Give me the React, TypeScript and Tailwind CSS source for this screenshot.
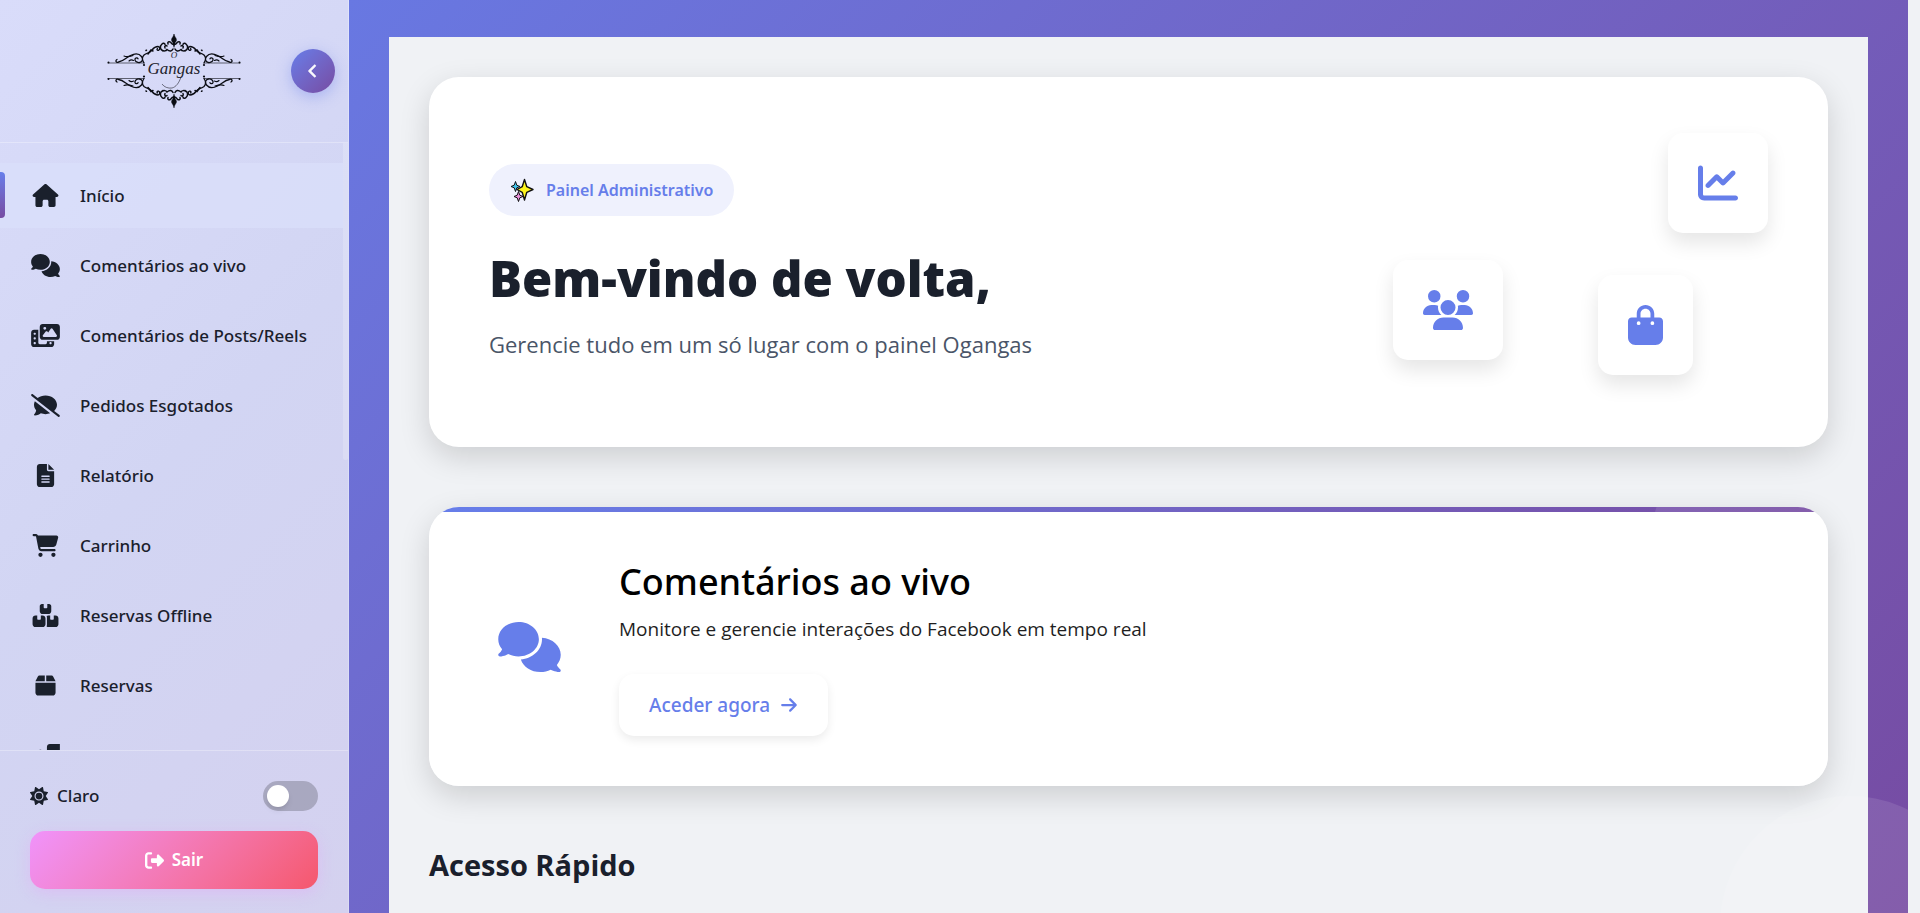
import { useState } from 'react';
import type { IconType } from 'react-icons';
import {
  FaArrowRight,
  FaBagShopping,
  FaBox,
  FaBoxesStacked,
  FaCartShopping,
  FaChartLine,
  FaChevronLeft,
  FaComments,
  FaCommentSlash,
  FaFileLines,
  FaHouse,
  FaPhotoFilm,
  FaRightFromBracket,
  FaSun,
  FaTruckRampBox,
  FaUsers,
} from 'react-icons/fa6';

const menu: { label: string; icon: IconType }[] = [
  { label: 'Início', icon: FaHouse },
  { label: 'Comentários ao vivo', icon: FaComments },
  { label: 'Comentários de Posts/Reels', icon: FaPhotoFilm },
  { label: 'Pedidos Esgotados', icon: FaCommentSlash },
  { label: 'Relatório', icon: FaFileLines },
  { label: 'Carrinho', icon: FaCartShopping },
  { label: 'Reservas Offline', icon: FaBoxesStacked },
  { label: 'Reservas', icon: FaBox },
  { label: 'Encomendas Enviadas', icon: FaTruckRampBox },
];

// One quarter of the frame, mirrored by the logo below
const Ornament = ({ transform }: { transform?: string }) => (
  <g transform={transform} fill="none" stroke="#0b0d14" strokeLinecap="round">
    <path d="M1 29H37" strokeWidth="0.6" />
    <circle cx="1.5" cy="28.6" r="1" fill="#0b0d14" stroke="none" />
    <circle cx="37" cy="31" r="1.1" fill="#0b0d14" stroke="none" />
    <path d="M10 25.500a1.500 1.500 0 1 0 1.500 2.500c5-.5 7-4 12-6.500 5-2.500 9-1.500 11 1 2 2.500 1 5.500-2 6-3 .3-5-1.500-4.500-3.500.5-1.500 2.500-1.600 3-.2" strokeWidth="1.300" />
    <path d="M17 22c3 1.500 6 .5 9-.5M22 27c1.500-1.500 3-1.500 4.500-.5" strokeWidth="1.100" />
    <path d="M37 29c-2-3-2-6 0-8 3-2.500 6-1.500 8-5 1.500-2 3-3.500 6-3.500 2 .3 2.500 3 .5 3.800-1.500.3-2-1-1-1.700" strokeWidth="1.300" />
    <path d="M41 20l3-4 2 1M39 16.500l.5-.3" strokeWidth="1.500" />
    <path d="M56 17c-3-1-3.500-5-1-7 1-1.200 3-1 3 .5M55 16c2 1.500 4 1 5-.5 3 2.500 5 1.500 6-.5M58 14c-1-2 1-3 2-2" strokeWidth="1.500" />
    <path d="M61 10c-.8-2 1-3 2.500-1.800 1.200.8.5 2.300 3.500 2.300" strokeWidth="1.500" />
    <path d="M67 0c-.5 3-3 4-2.500 6.500.3 1.200 1.500 1.500 1.300 3L67 13z" fill="#0b0d14" strokeWidth="0.300" />
  </g>
);

const Logo = () => (
  <svg viewBox="0 0 134 74" className="h-[74px] w-[134px]" role="img" aria-label="O Gangas">
    <Ornament />
    <Ornament transform="translate(134 0) scale(-1 1)" />
    <Ornament transform="translate(0 73.500) scale(1 -1)" />
    <Ornament transform="translate(134 73.500) scale(-1 -1)" />
    <text x="67" y="24" textAnchor="middle" fontSize="9" fontStyle="italic" fontFamily="Liberation Serif, serif" fill="#23242e">
      O
    </text>
    <text x="67" y="40" textAnchor="middle" fontSize="17" fontStyle="italic" fontFamily="Liberation Serif, serif" fill="#23242e">
      Gangas
    </text>
    <path d="M74 43c-2 6-5 10-9 11-4 .6-8-1-10-4" fill="none" stroke="#23242e" strokeWidth="0.600" />
  </svg>
);

const Sparkles = () => (
  <svg viewBox="0 0 24 24" className="size-6" stroke="#111" strokeLinejoin="round" aria-hidden="true">
    <path d="M5.500 3.500l1.300 3.700 3.200 1.300-3.200 1.300-1.300 3.700-1.300-3.700L1 8.500l3.200-1.300z" fill="#3fc4ee" strokeWidth="1" />
    <path d="M8.500 13.500l1.300 3.700 3.200 1.300-3.200 1.300-1.300 3.700-1.300-3.700L4 18.500l3.200-1.300z" fill="#ee8fdc" strokeWidth="1" />
    <path d="M14.500 1.500l2.300 7.200 6.200 2.800-6.200 2.800-2.300 7.700-2.300-7.700L7 11.500l5.200-2.800z" fill="#fdf41c" strokeWidth="1.400" />
  </svg>
);

const Sidebar = () => {
  const [dark, setDark] = useState(false);

  return (
    <aside className="sticky top-0 flex h-screen w-[349px] shrink-0 flex-col border-r border-white/20 bg-linear-135 from-[#d9dcfa] via-[#d2d5f3] to-[#d4d1ef] text-[#1a202c]">
      <header className="grid h-[143px] shrink-0 grid-cols-[1fr_auto_1fr] items-center border-b border-white/30 px-[13px]">
        <div className="col-start-2">
          <Logo />
        </div>
        <button
          type="button"
          aria-label="Recolher menu"
          className="flex size-11 items-center justify-center justify-self-end rounded-full bg-linear-135 from-[#667eea] to-[#764ba2] text-white shadow-[0_4px_15px_rgba(102,126,234,0.4)]"
        >
          <FaChevronLeft className="size-3.5" strokeWidth="30" />
        </button>
      </header>

      <div className="flex min-h-0 flex-1 overflow-hidden">
        <nav className="min-w-0 flex-1 py-5">
          <ul className="flex flex-col gap-[5px]">
            {menu.map(({ label, icon: Icon }, i) => (
              <li key={label}>
                <a
                  href="#"
                  className={
                    i === 0
                      ? 'relative flex h-[65px] items-center gap-5 bg-[#dadefa]/80 pl-[30px] text-[17px] font-medium whitespace-nowrap'
                      : 'flex h-[65px] items-center gap-5 pl-[30px] text-[17px] font-medium whitespace-nowrap'
                  }
                >
                  {i === 0 && (
                    <span className="absolute top-[9px] left-0 h-[46px] w-[5px] rounded-r bg-linear-to-b from-[#667eea] to-[#764ba2]" />
                  )}
                  <span className="flex w-[30px] justify-center">
                    <Icon className="h-[23px] w-[29px]" />
                  </span>
                  {label}
                </a>
              </li>
            ))}
          </ul>
        </nav>
        <div className="w-[5px]">
          <div className="h-[317px] rounded-b bg-white/20" />
        </div>
      </div>

      <footer className="flex flex-col gap-5 border-t border-white/30 px-[30px] pt-[30px] pb-6">
        <label className="flex h-[30px] items-center justify-between text-[17px] font-medium">
          <span className="flex items-center gap-[9px]">
            <FaSun className="size-[18px]" />
            Claro
          </span>
          <input
            type="checkbox"
            role="switch"
            checked={dark}
            onChange={(e) => setDark(e.target.checked)}
            className="flex h-[30px] w-[55px] appearance-none items-center rounded-full bg-black/20 px-1 before:size-[22px] before:rounded-full before:bg-white before:shadow-md checked:justify-end checked:bg-[#667eea]"
          />
        </label>
        <button
          type="button"
          className="flex h-[58px] items-center justify-center gap-2 rounded-[15px] bg-linear-135 from-[#f093fb] to-[#f5576c] text-[17px] font-semibold text-white shadow-[0_4px_15px_rgba(240,147,251,0.3)]"
        >
          <FaRightFromBracket className="size-[19px]" />
          Sair
        </button>
      </footer>
    </aside>
  );
};

const floating = 'absolute rounded-[15px] bg-white p-[30px] text-[#667eea] shadow-[0_10px_20px_rgba(0,0,0,0.1)]';

const Hero = () => (
  <section className="flex items-center justify-between rounded-[30px] bg-white p-[60px] shadow-[0_10px_30px_rgba(0,0,0,0.15)]">
    <div>
      <span className="inline-flex h-[52px] items-center gap-3 rounded-full bg-[#eff1fd] px-[21px] text-base font-semibold text-[#667eea]">
        <Sparkles />
        Painel Administrativo
      </span>
      <h1 className="mt-8 font-['Open_Sans',sans-serif] text-[49px] leading-[60px] font-extrabold text-[#1a202c]">
        Bem-vindo de volta,
      </h1>
      <p className="mt-5 font-['Open_Sans',sans-serif] text-[22px] leading-8 text-[#4a5568]">
        Gerencie tudo em um só lugar com o painel Ogangas
      </p>
    </div>
    <div className="relative h-[250px] w-[400px] shrink-0">
      <div className={`${floating} -top-1 right-0`}>
        <FaChartLine className="h-10 w-10" />
      </div>
      <div className={`${floating} top-[123px] left-[25px]`}>
        <FaUsers className="h-10 w-[50px]" />
      </div>
      <div className={`${floating} top-[138px] right-[75px]`}>
        <FaBagShopping className="h-10 w-[35px]" />
      </div>
    </div>
  </section>
);

const LiveCard = () => (
  <section className="relative overflow-hidden rounded-[30px] bg-white">
    <div className="h-[5px] bg-linear-to-r from-[#667eea] to-[#764ba2]" />
    <div className="absolute -top-[100px] -right-[120px] size-[300px] rounded-full bg-white/10" />
    <div className="flex items-center gap-[50px] px-[60px] pt-[45px] pb-[50px]">
      <div className="flex w-20 justify-center text-[#667eea]">
        <FaComments className="h-[50px] w-[63px]" />
      </div>
      <div>
        <h2 className="text-[36px] leading-[50px] font-medium text-black">Comentários ao vivo</h2>
        <p className="mt-2 font-['Open_Sans',sans-serif] text-[19px] leading-[29px] text-[#1f1f1f]">
          Monitore e gerencie interações do Facebook em tempo real
        </p>
        <a
          href="#"
          className="mt-[30px] inline-flex h-[62px] items-center gap-2.5 rounded-[15px] bg-white px-[30px] text-[19px] font-medium text-[#667eea] shadow-[0_4px_10px_rgba(0,0,0,0.08)]"
        >
          Aceder agora
          <FaArrowRight className="size-[18px]" />
        </a>
      </div>
    </div>
  </section>
);

export default function App() {
  return (
    <div className="flex min-h-screen bg-[#f0f2f5] pr-3 font-['Noto_Sans','Open_Sans',sans-serif]">
      <Sidebar />
      <div className="relative flex min-w-0 flex-1 flex-col overflow-hidden bg-linear-135 from-[#6878e2] to-[#764ba2] px-10 pt-[37px]">
        <main className="flex flex-1 flex-col gap-[60px] bg-[#f0f2f5] px-10 pt-10">
          <Hero />
          <div className="rounded-[30px] shadow-[0_10px_30px_rgba(0,0,0,0.15)]">
            <LiveCard />
          </div>
          <h2 className="font-['Open_Sans',sans-serif] text-[29px] leading-[38px] font-bold text-[#1a202c]">
            Acesso Rápido
          </h2>
        </main>
        <div className="pointer-events-none absolute -right-[72px] -bottom-[143px] size-[260px] rounded-full bg-white/10" />
      </div>
    </div>
  );
}
